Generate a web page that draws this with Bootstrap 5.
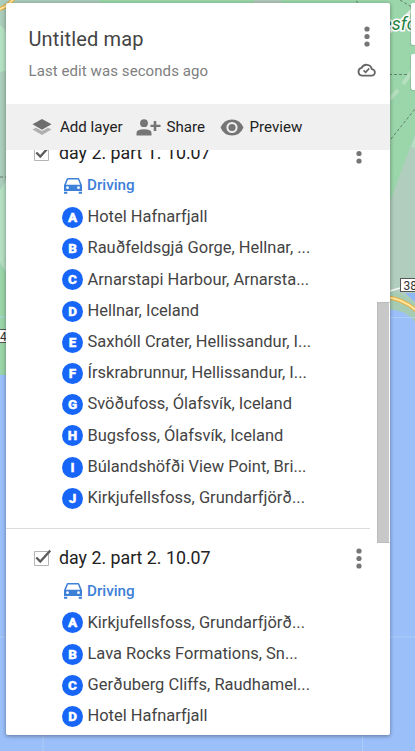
<!DOCTYPE html>
<html lang="en">
<head>
<meta charset="utf-8">
<meta name="viewport" content="width=device-width, initial-scale=1">
<title>Untitled map</title>
<link href="https://cdn.jsdelivr.net/npm/bootstrap@5.3.0/dist/css/bootstrap.min.css" rel="stylesheet">
<style>
  body { font-family: Roboto, "Open Sans", sans-serif; background: #9bbff9; height: 751px; }
  .map-canvas { z-index: 0; }
  .map-panel { z-index: 1; width: 384px; height: 732px; margin: 3px 0 0 6px; border-radius: 2px; box-shadow: 0 1px 4px rgba(0,0,0,.4); }
  .panel-head { height: 101px; padding: 20px 14px 0 22.5px; }
  .map-title { font-size: 20px; line-height: 32px; color: #444; letter-spacing: .15px; }
  .map-status { font-size: 15px; line-height: 20px; color: #808080; margin-top: 6px; letter-spacing: .08px; }
  .head-dots { margin-top: 2.5px; }
  .head-cloud { margin-top: 16px; }
  .panel-tools { height: 46px; background: #f0f0f0; padding-left: 26px; font-size: 15.1px; color: #222; }
  .tool-share { margin: 0 6px 0 13px; }
  .tool-preview { margin: 0 6px 0 14.5px; }
  .layer-list { height: 585px; }
  .layers-track { margin-top: -26px; width: 364px; }
  .layer { height: 405.4px; border-bottom: 1px solid #dcdcdc; padding-top: 12.6px; }
  .layer-title { height: 33px; padding-left: 27px; font-size: 17.8px; color: #222; }
  .tick { width: 18px; margin-right: 8px; }
  .mode { height: 32.4px; padding-left: 57px; color: #3d80d8; font-size: 15.2px; font-weight: 500; }
  .stop { height: 31.2px; padding-left: 56px; font-size: 16.47px; color: #444; }
  .pin { width: 21px; height: 21px; border-radius: 50%; background: #1766f8; color: #fff; font-size: 13.5px; font-weight: 900; margin-right: 4.5px; line-height: 21px; -webkit-text-stroke: .3px #fff; }
  .scroll-thumb { width: 13px; height: 241px; right: 0; top: 299px; background: #c8c8c8; border: 1px solid #bcbcbc; border-right-color: #fff; }
  svg text { font-family: Roboto, sans-serif; }
</style>
</head>
<body class="position-relative overflow-hidden">
<svg class="map-canvas position-absolute top-0 start-0" width="415" height="751" viewBox="0 0 415 751">
  <rect width="415" height="751" fill="#9bbff9"/>
  <path d="M0 0H220V374H0Z" fill="#abcdbb"/>
  <path d="M0 25Q6 28 8 40V70L0 72Z" fill="#b5e1c3"/>
  <path d="M0 190L8 178V275L0 262Z" fill="#b5dfc3"/>
  <path d="M0 264L8 275V375H0Z" fill="#99d5a9"/>
  <path d="M0 177H8" stroke="#65766b" stroke-dasharray="3 2"/>
  <path d="M0 317H8M0 637H415M43 735V751M362.500 735V751" stroke="#b4d0fa" stroke-width=".8"/>
  <path d="M0 9Q9 6 14-2" fill="none" stroke="#e5ac42" stroke-width="4"/>
  <path d="M0 9Q9 6 14-2" fill="none" stroke="#ffe69b" stroke-width="2"/>
  <rect x="-10" y="329.500" width="18" height="13" fill="#fff" stroke="#555"/>
  <text x="0" y="340.500" font-size="12" fill="#333">4</text>
  <path d="M100 0H415V300H388V4H100Z" fill="#9bd6aa"/>
  <path d="M254 0H281V4H254Z" fill="#b1c9bb"/>
  <path d="M415 134V320L405 307 388 300V207Z" fill="#b0cdbd"/>
  <path d="M411 147L415 136V148Z" fill="#b5e1c3"/>
  <path d="M388 292Q404 292 415 303V322Q406 310 388 309Z" fill="#a6cdb4"/>
  <path d="M405 293H415V302Z" fill="#8eb8f5"/>
  <path d="M389 74.500H415M391 139L415 109M400 0L415 9M356 1L360 4" fill="none" stroke="#60816a" stroke-dasharray="3 2"/>
  <path d="M390 32L415 7" stroke="#e5f1e8" stroke-width="3"/>
  <path d="M390 99L398 90M403 84L413 70" stroke="#b5dfbf" stroke-width="4"/>
  <path d="M390 291L400 288" stroke="#f5faf7" stroke-width="1.500"/>
  <path d="M388 297.500Q403 299 417 311" fill="none" stroke="#e5ad46" stroke-width="4"/>
  <path d="M388 297.500Q403 299 417 311" fill="none" stroke="#ffe69b" stroke-width="2"/>
  <path d="M390 317.500H415" stroke="#b4d0fa" stroke-width=".8"/>
  <rect x="400.500" y="278.500" width="18" height="13" fill="#fff" stroke="#555"/>
  <text x="403.500" y="289.500" font-size="12" fill="#333">38</text>
  <text x="382.500" y="29.500" font-size="18" font-style="italic" fill="#23833f" stroke="#fff" stroke-width="3" paint-order="stroke">esfo</text>
  <rect x="410" y="5" width="12" height="41" rx="2" fill="#779f82" opacity=".4"/>
  <rect x="411" y="3" width="10" height="42" rx="2" fill="#fff"/>
  <rect x="410" y="55" width="12" height="36" rx="2" fill="#779f82" opacity=".4"/>
  <rect x="411" y="54" width="10" height="36" rx="2" fill="#fff"/>
</svg>

<svg class="d-none">
  <symbol id="dots" viewBox="0 0 6 21"><circle cx="3" cy="3" r="2.600"/><circle cx="3" cy="10.500" r="2.600"/><circle cx="3" cy="18" r="2.600"/></symbol>
  <symbol id="car" viewBox="0 0 18 16"><path fill-rule="evenodd" d="M3.800 0H14.200Q15 0 15.400 1L18 7.200V13H0V7.200L2.600 1Q3 0 3.800 0ZM4 1.400L1.900 6.800H16.100L14 1.400ZM3.500 8.300A1.400 1.400 0 1 0 3.500 11.100 1.400 1.400 0 1 0 3.500 8.300ZM14.500 8.300A1.400 1.400 0 1 0 14.500 11.100 1.400 1.400 0 1 0 14.500 8.300ZM0 13.800H3.300V15.800H0ZM14.700 13.800H18V15.800H14.700Z"/></symbol>
  <symbol id="tick" viewBox="0 0 18 18"><path d="M1.500 2.500H15.500V16.500H1.500Z" fill="#fff" stroke="#b5b5b5"/><path d="M3.300 8.500L7.300 12.500 17.300 1.500" fill="none" stroke="#5c5c5c" stroke-width="2.300"/></symbol>
</svg>

<main class="map-panel position-relative bg-white overflow-hidden">
  <header class="panel-head d-flex justify-content-between">
    <div>
      <h1 class="map-title fw-normal mb-0">Untitled map</h1>
      <div class="map-status">Last edit was seconds ago</div>
    </div>
    <div class="d-flex flex-column align-items-center">
      <svg class="head-dots" width="6" height="21" fill="#757575"><use href="#dots"/></svg>
      <svg class="head-cloud" width="19" height="14" viewBox="0 0 19 14" fill="none" stroke="#666"><path d="M5 12.600H14.500A3.200 3.200 0 0 0 14.800 6.100 5.400 5.400 0 0 0 4.600 4.900 3.900 3.900 0 0 0 5 12.600Z" stroke-width="1.800"/><path d="M6.500 7.300L8.700 9.300 12.200 5.400" stroke-width="1.600"/></svg>
    </div>
  </header>
  <nav class="panel-tools d-flex align-items-center">
    <svg class="me-2" width="20" height="17" viewBox="0 0 20 17"><path d="M.5 10.500L4 8.800 10 12 16 8.800 19.500 10.500 10 16Z" fill="#b0b0b0"/><path d="M10 0L19.500 5.300 10 10.700.5 5.300Z" fill="#6e6e6e"/></svg>
    <span>Add layer</span>
    <svg class="tool-share" width="25" height="17" viewBox="0 0 25 17" fill="#757575"><circle cx="8" cy="4.200" r="3.900"/><path d="M.5 16.500V14Q.5 10.300 8 10.300T15.500 14V16.500ZM17.700 2H20.300V5.700H24.500V8.100H20.300V12H17.700V8.100H14.500V5.700H17.700Z"/></svg>
    <span>Share</span>
    <svg class="tool-preview" width="24" height="17" viewBox="0 0 24 17"><path d="M.5 8.500Q4 .5 12 .5T23.500 8.500Q20 16.500 12 16.500T.5 8.500Z" fill="#757575"/><circle cx="12" cy="8.500" r="4.600" fill="none" stroke="#f0f0f0" stroke-width="2"/></svg>
    <span>Preview</span>
  </nav>

  <div class="layer-list overflow-hidden">
    <div class="layers-track">
      <section class="layer">
        <div class="layer-title d-flex align-items-center"><svg class="tick" height="18"><use href="#tick"/></svg><span>day 2. part 1. 10.07</span><svg class="ms-auto me-2" width="6" height="21" fill="#757575"><use href="#dots"/></svg></div>
        <div class="mode d-flex align-items-center"><svg class="me-1" width="20" height="16" fill="#3d80d8"><use href="#car"/></svg>Driving</div>
        <div class="stop d-flex align-items-center"><span class="pin text-center">A</span><span>Hotel Hafnarfjall</span></div>
        <div class="stop d-flex align-items-center"><span class="pin text-center">B</span><span>Rauðfeldsgjá Gorge, Hellnar, ...</span></div>
        <div class="stop d-flex align-items-center"><span class="pin text-center">C</span><span>Arnarstapi Harbour, Arnarsta...</span></div>
        <div class="stop d-flex align-items-center"><span class="pin text-center">D</span><span>Hellnar, Iceland</span></div>
        <div class="stop d-flex align-items-center"><span class="pin text-center">E</span><span>Saxhóll Crater, Hellissandur, I...</span></div>
        <div class="stop d-flex align-items-center"><span class="pin text-center">F</span><span>Írskrabrunnur, Hellissandur, I...</span></div>
        <div class="stop d-flex align-items-center"><span class="pin text-center">G</span><span>Svöðufoss, Ólafsvík, Iceland</span></div>
        <div class="stop d-flex align-items-center"><span class="pin text-center">H</span><span>Bugsfoss, Ólafsvík, Iceland</span></div>
        <div class="stop d-flex align-items-center"><span class="pin text-center">I</span><span>Búlandshöfði View Point, Bri...</span></div>
        <div class="stop d-flex align-items-center"><span class="pin text-center">J</span><span>Kirkjufellsfoss, Grundarfjörð...</span></div>
      </section>
      <section class="layer">
        <div class="layer-title d-flex align-items-center"><svg class="tick" height="18"><use href="#tick"/></svg><span>day 2. part 2. 10.07</span><svg class="ms-auto me-2" width="6" height="21" fill="#757575"><use href="#dots"/></svg></div>
        <div class="mode d-flex align-items-center"><svg class="me-1" width="20" height="16" fill="#3d80d8"><use href="#car"/></svg>Driving</div>
        <div class="stop d-flex align-items-center"><span class="pin text-center">A</span><span>Kirkjufellsfoss, Grundarfjörð...</span></div>
        <div class="stop d-flex align-items-center"><span class="pin text-center">B</span><span>Lava Rocks Formations, Sn...</span></div>
        <div class="stop d-flex align-items-center"><span class="pin text-center">C</span><span>Gerðuberg Cliffs, Raudhamel...</span></div>
        <div class="stop d-flex align-items-center"><span class="pin text-center">D</span><span>Hotel Hafnarfjall</span></div>
      </section>
    </div>
  </div>
  <div class="scroll-thumb position-absolute"></div>
</main>
<script src="https://cdn.jsdelivr.net/npm/bootstrap@5.3.0/dist/js/bootstrap.bundle.min.js"></script>
</body>
</html>
